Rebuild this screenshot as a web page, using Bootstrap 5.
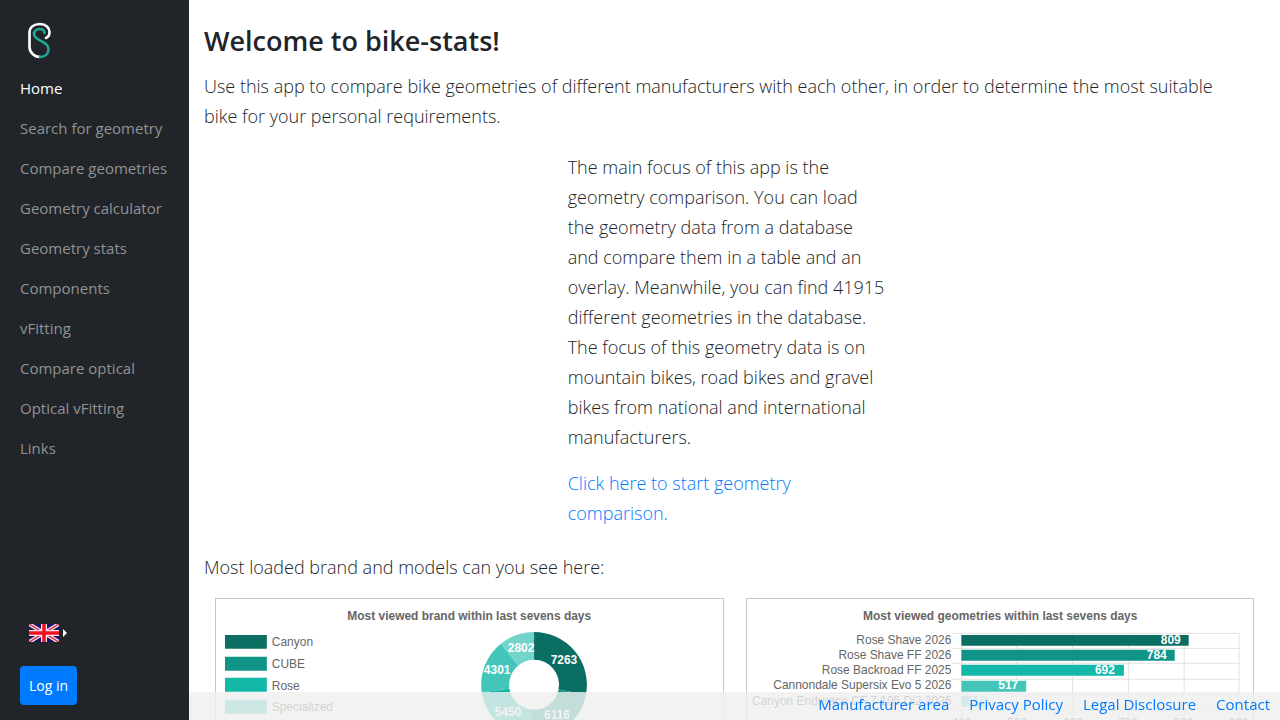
<!DOCTYPE html>
<html lang="en">
<head>
<meta charset="utf-8">
<meta name="viewport" content="width=device-width, initial-scale=1">
<title>bike-stats</title>
<link href="https://cdn.jsdelivr.net/npm/bootstrap@5.3.0/dist/css/bootstrap.min.css" rel="stylesheet">
<style>
  body { font-family: "Open Sans", "Noto Sans", sans-serif; font-size: 15px; line-height: 24px; color: #212529; }
  a { text-decoration: none; color: #007bff; }
  .side { width: 189px; background: #212529; padding: 16px 20px 15px; }
  .side .nav-link { color: #909294; padding: 8px 0; white-space: nowrap; }
  .side .nav-link.active { color: #fff; }
  .brand-mark { padding: 5px 7px 9px; line-height: 0; }
  .lang { background: none; border: 0; padding: 8px 9px; line-height: 0; }
  .btn-login { background: #007bff; color: #fff; font-size: 14px; line-height: 21px; padding: 9px; border: 0; border-radius: 4px; }
  .page { margin-left: 189px; padding: 24px 15px 60px; }
  .page h1 { font-size: 27px; font-weight: 600; line-height: 34px; margin-bottom: 13px; }
  .intro { font-size: 18px; font-weight: 300; line-height: 30px; margin-bottom: 16px; }
  .wide-gutter { --bs-gutter-x: 30px; padding-top: 5px; }
  .panel { border: 1px solid #c8c8c8; margin: 0 11px; }
  .panel svg { display: block; width: 100%; height: auto; font-family: "Liberation Sans", sans-serif; font-size: 12px; fill: #666; }
  .value { fill: #fff; font-weight: 700; }
  .foot { left: 189px; background: rgba(239, 239, 239, .8); padding: 0 10px 4px; gap: 20px; }
</style>
</head>
<body>
<nav class="side position-fixed top-0 bottom-0 start-0 d-flex flex-column">
  <a href="#" class="brand-mark" aria-label="bike-stats">
    <svg width="26" height="38" viewBox="0 0 26 38" fill="none" stroke-width="2.6" stroke-linecap="round">
      <path d="M13 36C7 36 2.500 31 2.500 26V12C2.500 6 7 3 13 3C19 3 22.500 7 22.500 11C22.500 14 21.500 16 19 17" stroke="#fff"/>
      <path d="M17.500 12C17.500 9.500 15.500 8 12.500 8C9.500 8 7 10 7 13C7 20 21.500 20 21.500 28C21.500 33 18 36 13 36" stroke="#20a896"/>
    </svg>
  </a>
  <div class="nav flex-column">
    <a class="nav-link active" href="#">Home</a>
    <a class="nav-link" href="#">Search for geometry</a>
    <a class="nav-link" href="#">Compare geometries</a>
    <a class="nav-link" href="#">Geometry calculator</a>
    <a class="nav-link" href="#">Geometry stats</a>
    <a class="nav-link" href="#">Components</a>
    <a class="nav-link" href="#">vFitting</a>
    <a class="nav-link" href="#">Compare optical</a>
    <a class="nav-link" href="#">Optical vFitting</a>
    <a class="nav-link" href="#">Links</a>
  </div>
  <div class="mt-auto d-flex flex-column align-items-start gap-3">
    <button type="button" class="lang d-flex align-items-center gap-1" aria-label="Language">
      <svg width="30" height="18" viewBox="0 0 60 36">
        <path fill="#1b1464" d="M0 0h60v36H0z"/>
        <path d="M0 0L60 36M60 0L0 36" stroke="#f3dfe6" stroke-width="8"/>
        <path d="M0 0L60 36M60 0L0 36" stroke="#d8304a" stroke-width="3"/>
        <path d="M30 0V36M0 18H60" stroke="#fbe4e8" stroke-width="12"/>
        <path d="M30 0V36M0 18H60" stroke="#ee1122" stroke-width="7"/>
      </svg>
      <svg width="4" height="8" viewBox="0 0 4 8"><path fill="#fff" d="M0 0L4 4L0 8z"/></svg>
    </button>
    <button type="button" class="btn btn-login">Log in</button>
  </div>
</nav>

<main class="page">
  <h1>Welcome to bike-stats!</h1>
  <p class="intro pe-4">Use this app to compare bike geometries of different manufacturers with each other, in order to determine the most suitable bike for your personal requirements.</p>
  <div class="row wide-gutter justify-content-center">
    <div class="col-4">
      <div class="pe-3">
        <p class="intro">The main focus of this app is the geometry comparison. You can load the geometry data from a database and compare them in a table and an overlay. Meanwhile, you can find 41915 different geometries in the database. The focus of this geometry data is on mountain bikes, road bikes and gravel bikes from national and international manufacturers.</p>
        <p class="intro"><a href="#">Click here to start geometry comparison.</a></p>
      </div>
    </div>
  </div>
  <p class="intro pt-2">Most loaded brand and models can you see here:</p>
  <div class="row g-0">
    <div class="col-6">
      <div class="panel">
        <svg viewBox="0 0 508 254" role="img" aria-label="Most viewed brand within last sevens days">
          <text x="254" y="21" text-anchor="middle" font-weight="700">Most viewed brand within last sevens days</text>
          <g>
            <path fill="#0b6e63" d="M9 36h42v14H9z"/><text x="56" y="47">Canyon</text>
            <path fill="#109488" d="M9 58h42v14H9z"/><text x="56" y="69">CUBE</text>
            <path fill="#14b8a8" d="M9 79h42v14H9z"/><text x="56" y="91">Rose</text>
            <path fill="#43c6b9" d="M9 101h42v14H9z"/><text x="56" y="112">Specialized</text>
            <path fill="#72d4cb" d="M9 123h42v14H9z"/><text x="56" y="134">Cannondale</text>
          </g>
          <g fill="none" stroke-width="28">
            <path stroke="#0b6e63" d="M319 47A39 39 0 0 1 357.300 93.300"/>
            <path stroke="#109488" d="M357.300 93.300A39 39 0 0 1 315.100 124.800"/>
            <path stroke="#14b8a8" d="M315.100 124.800A39 39 0 0 1 280.400 91.800"/>
            <path stroke="#43c6b9" d="M280.400 91.800A39 39 0 0 1 294.500 55.700"/>
            <path stroke="#72d4cb" d="M294.500 55.700A39 39 0 0 1 319 47"/>
          </g>
          <g class="value" text-anchor="middle">
            <text x="349" y="65">7263</text><text x="342" y="120">6116</text><text x="293" y="117">5450</text><text x="282" y="75">4301</text><text x="306" y="53">2802</text>
          </g>
        </svg>
      </div>
    </div>
    <div class="col-6">
      <div class="panel">
        <svg viewBox="0 0 508 254" role="img" aria-label="Most viewed geometries within last sevens days">
          <text x="254" y="21" text-anchor="middle" font-weight="700">Most viewed geometries within last sevens days</text>
          <path fill="none" stroke="#e2e2e2" d="M206 34.500H494M206 49.500H494M206 64.500H494M206 80.500H494M206 95.500H494M206 111.500H494M215.500 34V118M270.500 34V118M326.500 34V118M382.500 34V118M438.500 34V118M493.500 34V118"/>
          <path fill="#0b6e63" d="M215 36h228v11H215z"/>
          <path fill="#109488" d="M215 51h214v11H215z"/>
          <path fill="#14b8a8" d="M215 66h163v11H215z"/>
          <path fill="#43c6b9" d="M215 82h65v11H215z"/>
          <path fill="#72d4cb" d="M215 97h27v11H215z"/>
          <g text-anchor="end">
            <text x="205" y="45">Rose Shave 2026</text>
            <text x="205" y="60">Rose Shave FF 2026</text>
            <text x="205" y="75">Rose Backroad FF 2025</text>
            <text x="205" y="90">Cannondale Supersix Evo 5 2026</text>
            <text x="205" y="106">Canyon Endurace CF 7 105 Di2 2026</text>
          </g>
          <g class="value" text-anchor="end">
            <text x="435" y="45">809</text><text x="421" y="60">784</text><text x="369" y="75">692</text><text x="272" y="90">517</text><text x="242" y="106">448</text>
          </g>
          <g text-anchor="middle"><text x="215" y="128">400</text><text x="271" y="128">500</text><text x="327" y="128">600</text><text x="382" y="128">700</text><text x="438" y="128">800</text><text x="493" y="128">900</text></g>
        </svg>
      </div>
    </div>
  </div>
</main>

<footer class="foot position-fixed bottom-0 end-0 d-flex justify-content-end">
  <a href="#">Manufacturer area</a>
  <a href="#">Privacy Policy</a>
  <a href="#">Legal Disclosure</a>
  <a href="#">Contact</a>
</footer>
<script src="https://cdn.jsdelivr.net/npm/bootstrap@5.3.0/dist/js/bootstrap.bundle.min.js"></script>
</body>
</html>
